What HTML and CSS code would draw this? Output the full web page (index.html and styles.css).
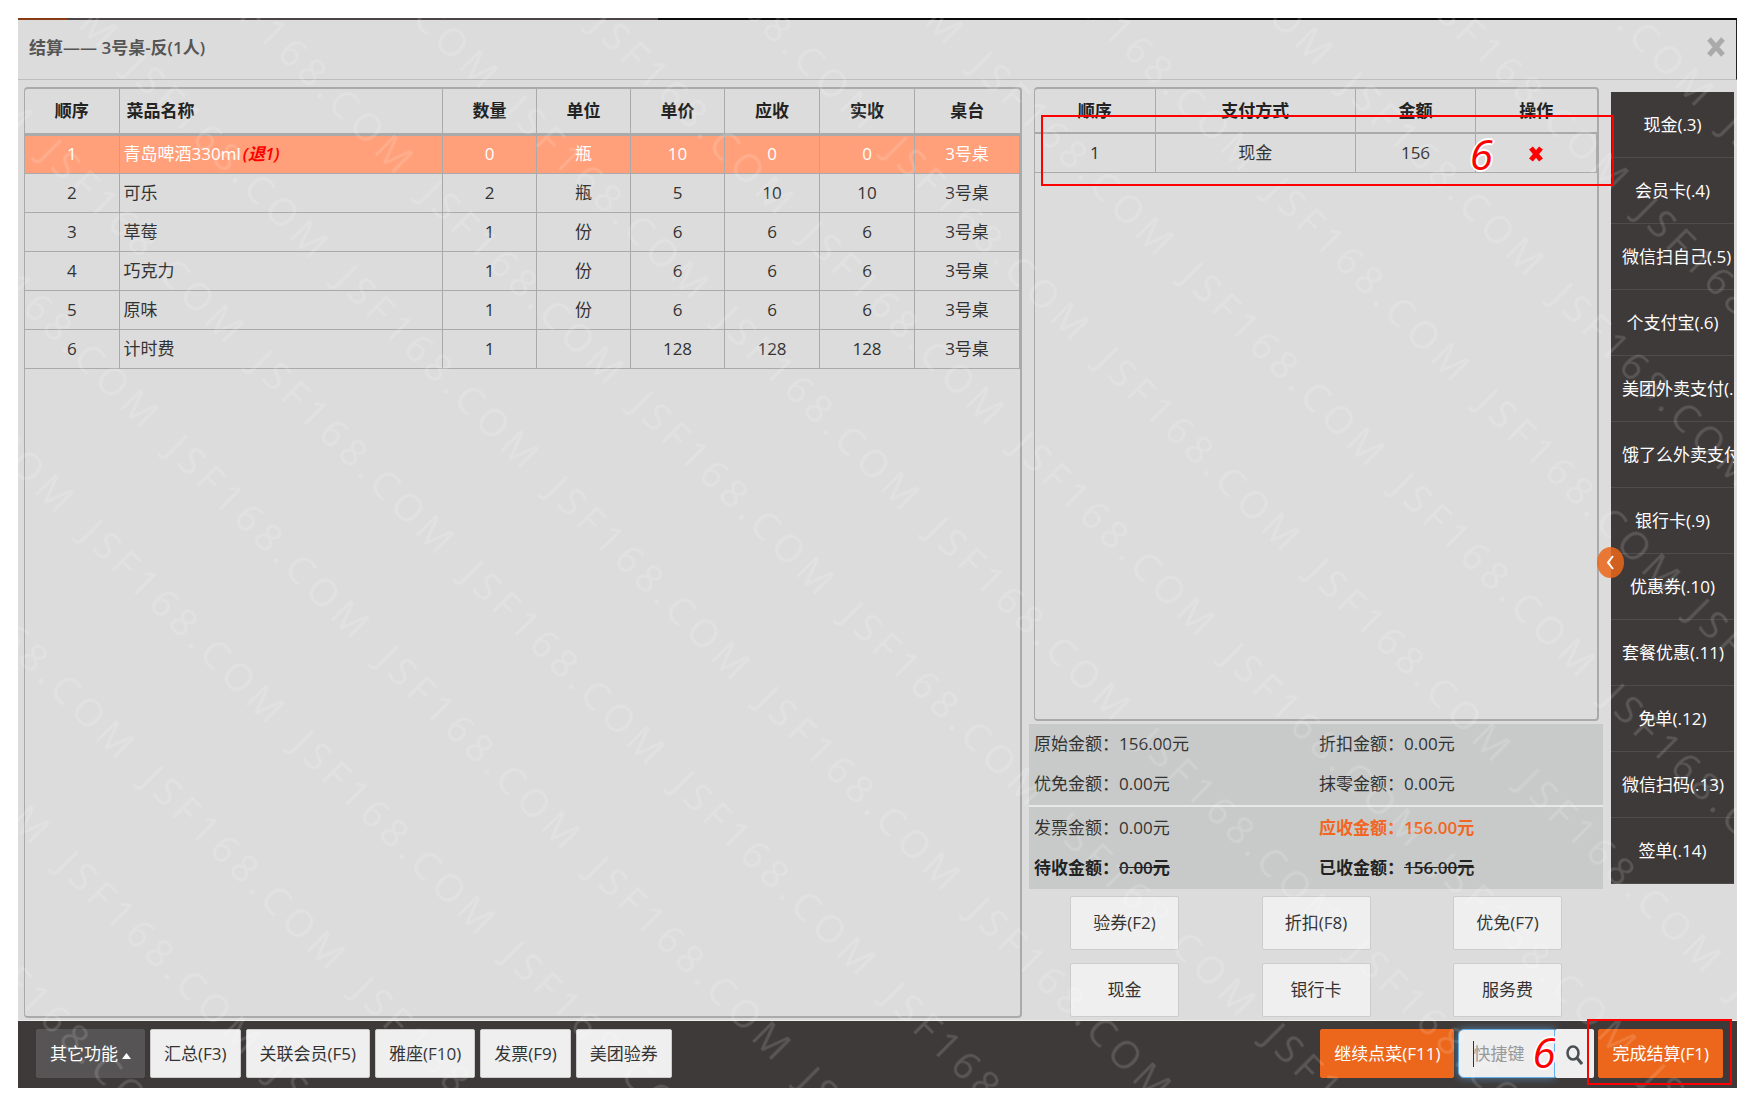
FILE: index.html
```html
<!DOCTYPE html>
<html lang="zh-CN">
<head>
<meta charset="utf-8">
<title>结算</title>
<link rel="stylesheet" href="styles.css">
</head>
<body>
<main class="dialog">
  <div class="strip"><span class="strip-logo"></span><span class="strip-tabs"></span></div>
  <header class="head">
    <h1>结算—— 3号桌-反(1人)</h1>
    <button class="close" type="button" aria-label="关闭"><svg width="18" height="20" viewBox="0 0 18 20"><path d="M2 2l14 16M16 2L2 18" stroke="#aaa" stroke-width="5"/></svg></button>
  </header>
  <div class="body">
    <section class="panel">
      <table class="dishes">
        <colgroup><col class="c-no"><col><col class="c-qty"><col class="c-qty"><col class="c-qty"><col class="c-sum"><col class="c-sum"><col class="c-desk"></colgroup>
        <thead><tr><th>顺序</th><th class="name">菜品名称</th><th>数量</th><th>单位</th><th>单价</th><th>应收</th><th>实收</th><th>桌台</th></tr></thead>
        <tbody>
          <tr class="selected"><td>1</td><td class="name">青岛啤酒330ml<em>(退1)</em></td><td>0</td><td>瓶</td><td>10</td><td>0</td><td>0</td><td>3号桌</td></tr>
          <tr><td>2</td><td class="name">可乐</td><td>2</td><td>瓶</td><td>5</td><td>10</td><td>10</td><td>3号桌</td></tr>
          <tr><td>3</td><td class="name">草莓</td><td>1</td><td>份</td><td>6</td><td>6</td><td>6</td><td>3号桌</td></tr>
          <tr><td>4</td><td class="name">巧克力</td><td>1</td><td>份</td><td>6</td><td>6</td><td>6</td><td>3号桌</td></tr>
          <tr><td>5</td><td class="name">原味</td><td>1</td><td>份</td><td>6</td><td>6</td><td>6</td><td>3号桌</td></tr>
          <tr><td>6</td><td class="name">计时费</td><td>1</td><td></td><td>128</td><td>128</td><td>128</td><td>3号桌</td></tr>
        </tbody>
      </table>
    </section>
    <section class="pay">
      <div class="panel pay-panel">
        <table class="payments">
          <colgroup><col class="p-no"><col><col class="p-sum"><col class="p-act"></colgroup>
          <thead><tr><th>顺序</th><th>支付方式</th><th>金额</th><th>操作</th></tr></thead>
          <tbody><tr><td>1</td><td>现金</td><td>156</td><td><button class="remove" type="button" aria-label="删除"><svg width="14" height="16" viewBox="0 0 14 16"><path d="M2 2l10 12M12 2L2 14" stroke="#f00" stroke-width="5"/></svg></button></td></tr></tbody>
        </table>
        <div class="mark mark-pay"><span class="step">6</span></div>
      </div>
      <div class="totals">
        <div class="total-group">
          <p>原始金额：156.00元</p><p>折扣金额：0.00元</p>
          <p>优免金额：0.00元</p><p>抹零金额：0.00元</p>
        </div>
        <div class="total-group">
          <p>发票金额：0.00元</p><p class="due">应收金额：156.00元</p>
          <p class="strong">待收金额：<s>0.00元</s></p><p class="strong">已收金额：<s>156.00元</s></p>
        </div>
      </div>
      <div class="actions">
        <button type="button">验券(F2)</button><button type="button">折扣(F8)</button><button type="button">优免(F7)</button>
        <button type="button">现金</button><button type="button">银行卡</button><button type="button">服务费</button>
      </div>
    </section>
    <aside class="side">
      <nav class="methods">
        <button type="button">现金(.3)</button>
        <button type="button">会员卡(.4)</button>
        <button type="button">微信扫自己(.5)</button>
        <button type="button">个支付宝(.6)</button>
        <button type="button">美团外卖支付(.7)</button>
        <button type="button">饿了么外卖支付(.8)</button>
        <button type="button">银行卡(.9)</button>
        <button type="button">优惠券(.10)</button>
        <button type="button">套餐优惠(.11)</button>
        <button type="button">免单(.12)</button>
        <button type="button">微信扫码(.13)</button>
        <button type="button">签单(.14)</button>
      </nav>
      <button class="toggle" type="button" aria-label="收起"><svg width="9" height="15" viewBox="0 0 9 15"><path d="M7 1L2 7.500L7 14" fill="none" stroke="#fff" stroke-width="2"/></svg></button>
    </aside>
  </div>
  <footer class="foot">
    <button class="more" type="button">其它功能<svg width="9" height="6" viewBox="0 0 9 6"><path d="M0 6L4.500 0L9 6z" fill="#fff"/></svg></button>
    <button type="button">汇总(F3)</button>
    <button type="button">关联会员(F5)</button>
    <button type="button">雅座(F10)</button>
    <button type="button">发票(F9)</button>
    <button type="button">美团验券</button>
    <div class="foot-right">
      <button class="primary" type="button">继续点菜(F11)</button>
      <div class="search">
        <span class="caret"></span>
        <input type="text" placeholder="快捷键" aria-label="快捷键">
        <button type="button" aria-label="搜索"><svg width="17" height="20" viewBox="0 0 17 20"><ellipse cx="7" cy="8" rx="5.500" ry="6.500" fill="none" stroke="#4a4f52" stroke-width="2.500"/><path d="M11 13l5 6" stroke="#4a4f52" stroke-width="3"/></svg></button>
        <span class="step step-search">6</span>
      </div>
      <div class="finish">
        <button class="primary" type="button">完成结算(F1)</button>
        <div class="mark mark-finish"></div>
      </div>
    </div>
  </footer>
  <svg class="watermark" aria-hidden="true">
    <defs>
      <pattern id="wm-mid" x="427" y="168" width="298" height="120" patternUnits="userSpaceOnUse"><text x="8" y="36">JSF168.COM</text></pattern>
      <pattern id="wm-low" x="644" y="179" width="298" height="120" patternUnits="userSpaceOnUse"><text x="8" y="36">JSF168.COM</text></pattern>
      <pattern id="wm-high" x="405" y="161" width="298" height="120" patternUnits="userSpaceOnUse"><text x="8" y="36">JSF168.COM</text></pattern>
    </defs>
    <g transform="translate(-18 -18) rotate(45)">
      <rect x="0" y="-1300" width="2100" height="508" fill="url(#wm-high)"/>
      <rect x="0" y="-792" width="2100" height="1200" fill="url(#wm-mid)"/>
      <rect x="0" y="408" width="2100" height="500" fill="url(#wm-low)"/>
    </g>
  </svg>
</main>
</body>
</html>
```
FILE: styles.css
```css
* { box-sizing: border-box; }
body {
  margin: 0;
  padding: 18px 17px 18px 18px;
  background: #fff;
  color: #333;
  font: 17px/24px "Open Sans", "Noto Sans CJK SC", sans-serif;
}
button, input { font: inherit; color: inherit; }
button { cursor: pointer; white-space: nowrap; }
.dialog {
  position: relative;
  display: flex;
  flex-direction: column;
  min-height: calc(100vh - 36px);
  background: #dcdcdc;
}
.strip { display: flex; height: 2px; background: #0d0b0d; }
.strip-logo { width: 50px; background: #8a3c12; }
.strip-tabs { width: 590px; background: #4a4446; }
.head {
  display: flex;
  align-items: center;
  justify-content: space-between;
  height: 60px;
  padding: 0 11px 6px;
  border-bottom: 1px solid #bdbdbd;
  border-right: 1px solid #222;
}
h1 { margin: 0; padding-top: 2px; font-size: 17px; font-weight: 600; color: #555; }
.close { display: flex; padding: 0; border: 0; background: none; }
.body {
  flex: 1;
  display: grid;
  grid-template-columns: minmax(0, 1fr) 589px 123px;
  padding: 7px 3px 2px 6px;
  border-bottom: 1px solid #eee;
}
.panel { border: 1px solid #aaa; border-width: 2px 2px 2px 1px; border-radius: 4px; }
table { width: 100%; border-collapse: collapse; table-layout: fixed; }
th, td { padding: 0; border: 1px solid #aaa; text-align: center; height: 39px; }
th { height: 45px; color: #222; font-weight: 600; border-bottom: 3px solid #aaa; border-top: 0; }
th:first-child, td:first-child { border-left: 0; }
th:last-child { border-right: 0; }
.name { text-align: left; padding-left: 4px; }
th.name { padding-left: 7px; }
.c-no { width: 94px; }
.c-qty { width: 94px; }
.c-sum { width: 95px; }
.c-desk { width: 105px; }
.selected { background: #ffa07a; color: #fff; }
.selected em { margin-left: 2px; color: #f00; font-weight: 600; }
.pay { display: flex; flex-direction: column; margin: 0 8px 0 7px; }
.pay-panel { position: relative; flex: 1; margin: 0 4px 3px 5px; }
.payments th { height: 44px; border-bottom-width: 2px; }
.p-no { width: 120px; }
.p-sum { width: 120px; }
.p-act { width: 121px; }
.remove { display: inline-flex; vertical-align: middle; padding: 0; border: 0; background: none; }
.mark { position: absolute; z-index: 1; border: 2px solid #f00; pointer-events: none; }
.mark-pay { left: 6px; right: -17px; top: 26px; height: 71px; }
.step {
  position: absolute;
  font: italic 42px/42px "Open Sans", sans-serif;
  color: #f00;
  text-shadow: 2px 0 #fff, -2px 0 #fff, 0 2px #fff, 0 -2px #fff;
}
.mark-pay .step { right: 119px; top: 16px; }
.totals { background: #c8cac9; }
.total-group {
  display: grid;
  grid-template-columns: 285px 1fr;
  align-content: start;
  padding: 0 5px;
  height: 81px;
}
.total-group + .total-group { padding-top: 1px; border-top: 2px solid #e8e8e8; height: 84px; }
.total-group p { margin: 0; line-height: 40px; }
.due { color: #f26522; font-weight: 600; }
.strong { color: #222; font-weight: 600; }
.actions {
  display: grid;
  grid-template-columns: repeat(3, 109px);
  justify-content: space-between;
  row-gap: 13px;
  padding: 7px 41px 1px;
}
.actions button { height: 54px; padding: 0; border: 1px solid #ccc; border-radius: 2px; background: #efefef; }
.side { position: relative; padding-top: 5px; }
.methods { display: flex; flex-direction: column; overflow: hidden; background: #3e3a39; }
.methods button {
  height: 66px;
  padding: 0 11px;
  border: 0;
  border-bottom: 1px solid #504c4b;
  background: none;
  color: #fff;
}
.toggle {
  position: absolute;
  left: -14px;
  top: 460px;
  display: flex;
  align-items: center;
  justify-content: center;
  width: 27px;
  height: 31px;
  padding: 0;
  border: 0;
  border-radius: 50%;
  background: rgba(235, 102, 25, .85);
}
.foot {
  display: flex;
  align-items: center;
  gap: 5px;
  height: 67px;
  padding: 0 14px 2px 18px;
  background: #3e3a39;
}
.foot button { height: 49px; padding: 0 13px; border: 1px solid #ccc; border-radius: 2px; background: #efefef; }
.foot .more { background: #565454; border-color: #565454; color: #fff; }
.more svg { margin-left: 4px; vertical-align: 1px; }
.foot .primary { background: #ec671b; border-color: #ec671b; color: #fff; }
.foot-right { display: flex; align-items: center; gap: 4px; margin-left: auto; }
.search { position: relative; display: flex; width: 136px; }
.search input {
  width: 97px;
  height: 49px;
  padding: 0 14px;
  border: 1px solid #66afe9;
  border-radius: 6px 0 0 6px;
  background: #eee;
  box-shadow: 0 0 8px rgba(102, 175, 233, .6);
}
.search input::placeholder { color: #999; opacity: 1; }
.foot .search button { flex: 1; padding: 0; border: 0; background: #efefef; }
.search svg { vertical-align: middle; }
.caret { position: absolute; left: 15px; top: 12px; width: 1px; height: 26px; background: #333; }
.step-search { left: 74px; top: 2px; }
.finish { position: relative; }
.mark-finish { top: -10px; bottom: -7px; left: -11px; right: -9px; }
.watermark { position: absolute; inset: 0; width: 100%; height: 100%; overflow: hidden; pointer-events: none; }
.watermark text { font: 38px "Open Sans", sans-serif; letter-spacing: 6px; fill: #fff; fill-opacity: .14; }
```
